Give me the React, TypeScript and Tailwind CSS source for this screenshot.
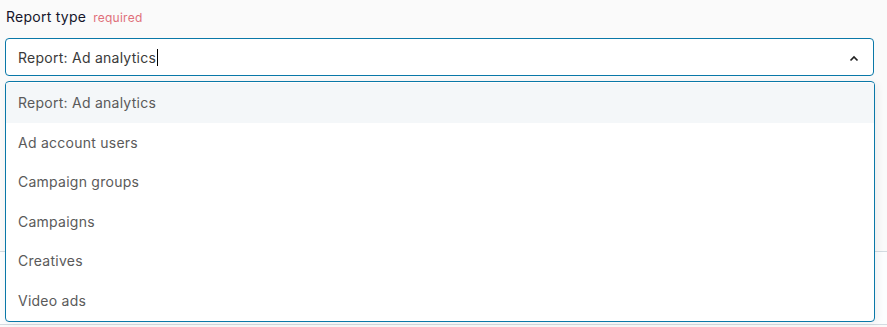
import React from "react";

const options = [
  "Report: Ad analytics",
  "Ad account users",
  "Campaign groups",
  "Campaigns",
  "Creatives",
  "Video ads",
];

const App = () => {
  return (
    <div className="relative w-[887px] h-[327px] overflow-hidden bg-[#fafafa] font-['Inter','Liberation_Sans',sans-serif] tracking-[0.25px]">
      <div className="flex items-baseline gap-[7px] px-[6px] pt-[6px] h-[38px]">
        <span className="text-[14px] text-[#15152a]">Report type</span>
        <span className="text-[12px] text-[#e0707a]">required</span>
      </div>
      <div className="mx-[5px] mr-[13px] h-[38px] flex items-center justify-between rounded-[4px] border border-[#0a78a8] bg-white pl-[12px] pr-[13px]">
        <div className="flex items-center text-[14px] text-[#3a3a3a]">
          <span>Report: Ad analytics</span>
          <span className="ml-[1px] w-[1px] h-[17px] bg-black" />
        </div>
        <svg width="12" height="8" viewBox="0 0 12 8" className="mt-[1px] text-[#222]">
          <polyline points="2.5,6.5 6,3 9.5,6.5" fill="none" stroke="currentColor" strokeWidth="1.7" />
        </svg>
      </div>
      <div className="h-[175px]" />
      <div className="h-[73px] border-t border-[#d3dbe1] bg-[#fcfdfe]" />
      <div className="border-t border-[#d3dbe1]" />

      <div className="absolute left-[5px] top-[81px] w-[870px] h-[241px] rounded-[4px] border border-[#0a78a8] bg-white pt-[1px] shadow-[2px_2px_8px_rgba(0,0,0,0.06)] overflow-hidden">
        {options.map((o, i) => (
          <div
            key={o}
            className={`h-[39.5px] flex items-center pl-[12px] text-[14px] text-[#5a5a5a] ${i === 0 ? "bg-[#f4f7f9]" : ""}`}
          >
            {o}
          </div>
        ))}
      </div>
    </div>
  );
};

export default App;
